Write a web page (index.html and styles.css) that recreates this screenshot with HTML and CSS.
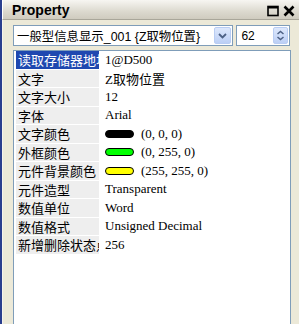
FILE: index.html
```html
<!DOCTYPE html>
<html>
<head>
<meta charset="utf-8">
<link rel="stylesheet" href="styles.css">
</head>
<body>
<div class="window">
  <div class="titlebar">
    <span class="title">Property</span>
    <span class="controls">
      <svg class="ico" width="13" height="12" viewBox="0 0 13 12"><rect x="1" y="1.5" width="10" height="9" fill="none" stroke="#000" stroke-width="1.6"/><rect x="1" y="1" width="10" height="2.5" fill="#000"/></svg>
      <svg class="ico" width="13" height="12" viewBox="0 0 13 12"><path d="M1.5 1.5 L10.5 10.5 M10.5 1.5 L1.5 10.5" stroke="#000" stroke-width="2.6"/></svg>
    </span>
  </div>
  <div class="content">
    <div class="toolrow">
      <div class="combo">
        <span class="combo-text">一般型信息显示_001 {Z取物位置}</span>
        <span class="dropbtn"><svg width="9" height="6" viewBox="0 0 9 6"><path d="M1 1 L4.5 4.5 L8 1" fill="none" stroke="#4d6185" stroke-width="1.8"/></svg></span>
      </div>
      <div class="spin">
        <span class="spin-text">62</span>
        <span class="spinbtn"><svg width="9" height="11" viewBox="0 0 9 11"><path d="M1.5 4 L4.5 1.5 L7.5 4 M1.5 7 L4.5 9.5 L7.5 7" fill="none" stroke="#4d6185" stroke-width="1.5"/></svg></span>
      </div>
    </div>
    <div class="grid">
      <div class="row sel"><div class="label">读取存储器地址</div><div class="value">1@D500</div></div>
      <div class="row"><div class="label">文字</div><div class="value">Z取物位置</div></div>
      <div class="row"><div class="label">文字大小</div><div class="value">12</div></div>
      <div class="row"><div class="label">字体</div><div class="value">Arial</div></div>
      <div class="row"><div class="label">文字颜色</div><div class="value"><span class="sw sw-black"></span>(0, 0, 0)</div></div>
      <div class="row"><div class="label">外框颜色</div><div class="value"><span class="sw sw-green"></span>(0, 255, 0)</div></div>
      <div class="row"><div class="label">元件背景颜色</div><div class="value"><span class="sw sw-yellow"></span>(255, 255, 0)</div></div>
      <div class="row"><div class="label">元件造型</div><div class="value">Transparent</div></div>
      <div class="row"><div class="label">数值单位</div><div class="value">Word</div></div>
      <div class="row"><div class="label">数值格式</div><div class="value">Unsigned Decimal</div></div>
      <div class="row"><div class="label">新增删除状态点</div><div class="value">256</div></div>
    </div>
  </div>
</div>
</body>
</html>
```
FILE: styles.css
```css
html, body {
  margin: 0;
  padding: 0;
  width: 299px;
  height: 324px;
  overflow: hidden;
  background: #ece9d8;
}
.window {
  box-sizing: border-box;
  width: 299px;
  height: 324px;
  display: flex;
  flex-direction: column;
  border-left: 2px solid #2a3e8e;
  background: #ece9d8;
  overflow: hidden;
}
.titlebar {
  box-sizing: border-box;
  height: 20px;
  flex: none;
  display: flex;
  align-items: center;
  justify-content: space-between;
  padding-left: 9px;
  padding-right: 3px;
  background: linear-gradient(#f7f6f2, #dcd9cf 60%, #cfcbbf);
  border-left: 1px solid #ffffff;
  border-bottom: 1px solid #a9a69a;
}
.title {
  font: bold 14px "Liberation Sans", Arial, sans-serif;
  color: #000;
}
.controls {
  display: flex;
  gap: 3px;
  align-items: center;
  padding-top: 2px;
}
.ico { display: block; }
.content {
  flex: 1;
  display: flex;
  flex-direction: column;
  padding: 5px 9px 0 10px;
  border-left: 1px solid #f6f4ec;
  background: #ece9d8;
}
.toolrow {
  display: flex;
  gap: 3px;
  height: 21px;
  flex: none;
}
.combo, .spin {
  box-sizing: border-box;
  height: 21px;
  border: 1px solid #7f9db9;
  background: #fff;
  display: flex;
  align-items: center;
}
.combo { width: 222px; }
.spin { width: 54px; }
.combo-text, .spin-text {
  flex: 1;
  font: 12.4px "Liberation Sans", "Noto Sans CJK SC", sans-serif;
  color: #000;
  padding-left: 3px;
  white-space: nowrap;
  overflow: hidden;
}
.spin-text { font: 12px "Liberation Sans", Arial, sans-serif; padding-left: 4px; }
.dropbtn, .spinbtn {
  box-sizing: border-box;
  width: 17px;
  height: 17px;
  margin-right: 1px;
  border-radius: 2px;
  background: linear-gradient(#dde8fc, #bccff5);
  border: 1px solid #b9cdf3;
  display: flex;
  align-items: center;
  justify-content: center;
}
.spinbtn { width: 15px; }
.grid {
  box-sizing: border-box;
  margin-top: 4px;
  flex: 1;
  width: 278px;
  background: #fff;
  border: 1px solid #7f9db9;
  border-bottom: none;
  padding: 0 0 0 2px;
}
.row {
  display: flex;
  height: 18.5px;
  align-items: stretch;
}
.label {
  box-sizing: border-box;
  width: 83px;
  flex: none;
  background: #eeeeee;
  border-bottom: 1.5px solid #fff;
  font: 13px "Noto Sans CJK SC", sans-serif;
  line-height: 17px;
  padding-left: 2px;
  color: #000;
  white-space: nowrap;
  overflow: hidden;
}
.sel .label {
  background: #1f48b0;
  color: #fff;
}
.value {
  flex: 1;
  display: flex;
  align-items: center;
  padding-left: 6px;
  padding-bottom: 1px;
  font: 13px "Liberation Serif", "Noto Sans CJK SC", serif;
  color: #000;
  white-space: nowrap;
}
.sw {
  box-sizing: border-box;
  display: inline-block;
  width: 29px;
  height: 8px;
  border-radius: 4px;
  border: 1px solid #000;
  margin-right: 7px;
}
.sw-black { background: #000; }
.sw-green { background: #00ff00; }
.sw-yellow { background: #ffff00; }
```
